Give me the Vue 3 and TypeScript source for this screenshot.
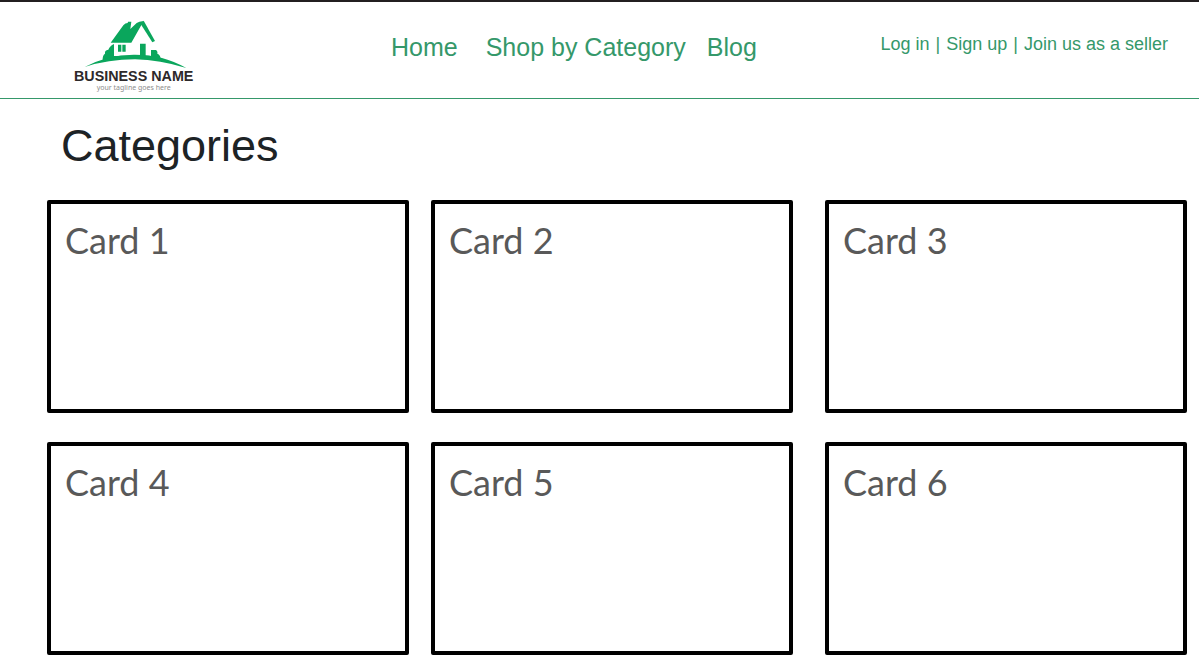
<script setup lang="ts">
interface Card {
  id: number
  title: string
}

const cards: Card[] = Array.from({ length: 6 }, (_, i) => ({ id: i + 1, title: `Card ${i + 1}` }))
</script>

<template>
  <div class="page">
    <header class="header">
      <a class="logo" href="#" aria-label="Business name home">
        <svg width="150" height="96" viewBox="0 6 450 288" aria-hidden="true">
          <g fill="#0aa65c">
            <path d="M152 128 L190 76 Q196 69 203 69 L204 65 L214 65 L211 87 L230 69 Q236 64 251 63 L214 128 Z" />
            <path d="M242 72 L251 62 L285 123 L277 127 Z" />
            <path d="M174 134h10v21h-10z M187 134h10v21h-10z" />
            <path d="M128 181 Q127 166 135 161 Q133 151 145 149 Q149 138 162 132 L162 168 L240 167 L240 131 L257 131 L257 167 L273 168 L273 150 L287 150 Q294 153 292 161 Q302 164 303 181 Q220 172 128 181 Z" />
            <path d="M74 201 Q145 163 225 164 Q310 164 379 204 Q300 180 225 178 Q145 178 74 201 Z" />
          </g>
          <text class="brand" x="221" y="244" text-anchor="middle">BUSINESS NAME</text>
          <text class="tagline" x="221" y="271" text-anchor="middle">your tagline goes here</text>
        </svg>
      </a>
      <nav class="nav" aria-label="Main">
        <a href="#">Home</a>
        <a class="shop" href="#">Shop by Category</a>
        <a href="#">Blog</a>
      </nav>
      <div class="account">
        <a href="#">Log in</a>
        <span>|</span>
        <a href="#">Sign up</a>
        <span>|</span>
        <a href="#">Join us as a seller</a>
      </div>
    </header>
    <main class="main">
      <h1>Categories</h1>
      <div class="cards">
        <section v-for="card in cards" :key="card.id" class="card">
          <h2>{{ card.title }}</h2>
        </section>
      </div>
    </main>
  </div>
</template>

<style>
body {
  margin: 0;
  background: #fff;
}
</style>

<style scoped>
.page {
  font-family: "Liberation Sans", Arial, sans-serif;
  border-top: 2px solid #231f20;
}
.header {
  display: flex;
  align-items: flex-start;
  padding: 0 31px 0 60px;
  border-bottom: 1px solid #35986a;
}
a {
  color: inherit;
  text-decoration: none;
}
.logo svg {
  display: block;
}
.brand {
  font-size: 43px;
  font-weight: 700;
  fill: #2d292a;
}
.tagline {
  font-family: "Noto Sans", sans-serif;
  font-size: 21px;
  fill: #8c8c8c;
}
.nav {
  display: flex;
  gap: 21px;
  margin-left: 181px;
  padding-top: 30px;
  color: #35986a;
  font-size: 25px;
  line-height: 30px;
  white-space: nowrap;
}
.shop {
  margin-left: 7px;
}
.account {
  display: flex;
  gap: 6px;
  margin-left: auto;
  padding-top: 32px;
  color: #35986a;
  font-size: 18px;
  line-height: 20px;
  white-space: nowrap;
}
.main {
  padding: 21px 12px 9px 47px;
}
h1 {
  margin: 0 0 28px;
  padding-left: 14px;
  color: #1d2326;
  font-size: 45px;
  font-weight: 400;
  line-height: 52px;
}
.cards {
  display: grid;
  grid-template-columns: 1fr 22px 1fr 32px 1fr;
  row-gap: 29px;
}
.card {
  box-sizing: border-box;
  min-height: 213px;
  padding: 14px;
  border: 4px solid #000;
  border-radius: 2px;
}
.card:nth-child(3n + 1) {
  grid-column: 1;
}
.card:nth-child(3n + 2) {
  grid-column: 3;
}
.card:nth-child(3n) {
  grid-column: 5;
}
h2 {
  margin: 0;
  color: #595959;
  font-family: Lato, sans-serif;
  font-size: 36px;
  font-weight: 400;
  line-height: 44px;
}
</style>
